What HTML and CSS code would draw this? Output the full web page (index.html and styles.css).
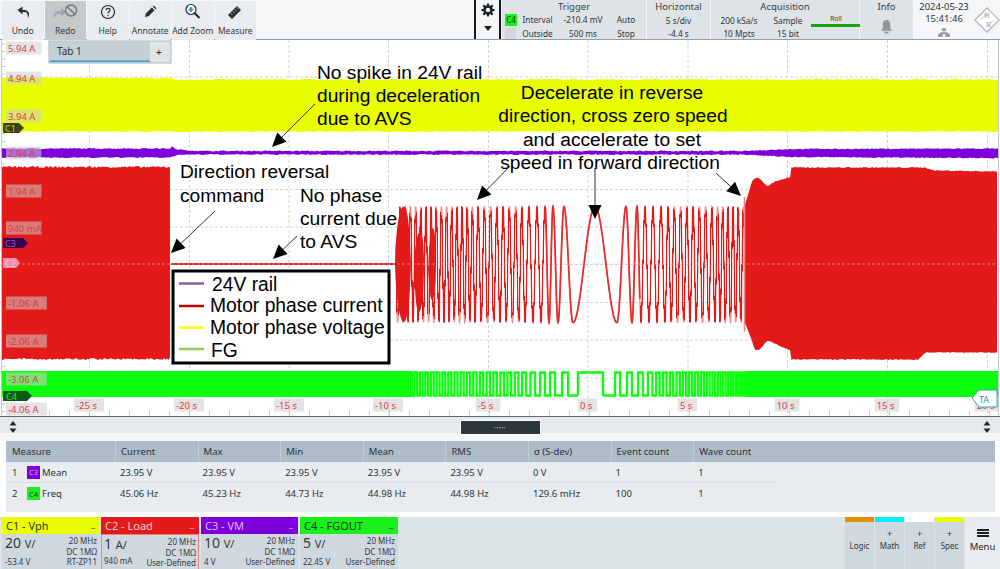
FILE: index.html
```html
<!DOCTYPE html>
<html lang="en">
<head>
<meta charset="utf-8">
<title>Oscilloscope</title>
<link rel="stylesheet" href="styles.css">
</head>
<body>
<div class="app">
  <header class="topbar">
    <nav class="tools">
      <div class="tool"><svg class="ico" viewBox="0 0 20 20"><path d="M12 17c2-3 1.500-7-3-8H6.500V5.500L1.500 9l5 4.500V11H9c2 .2 3 2.500 3 6z" fill="#2b2f33" transform="translate(3 -2)"/></svg><span>Undo</span></div>
      <div class="tool tool-off"><svg class="ico ico-wide" viewBox="0 0 28 20"><path d="M3 16c-1-4 .5-8 5-8h2V4.500L15 9l-5 4.500V11H8c-2.500 0-4 2-5 5z" fill="#a3a9ad"/><circle cx="20" cy="7.500" r="5.500" fill="none" stroke="#70767b" stroke-width="1.400"/><path d="M16 3.500l8 8" stroke="#70767b" stroke-width="1.400"/></svg><span>Redo</span></div>
      <div class="tool"><svg class="ico" viewBox="0 0 20 20"><circle cx="10" cy="9" r="6.500" fill="none" stroke="#2b2f33" stroke-width="1.200"/><path d="M8 7.200c.2-1.300 1-1.900 2-1.900 1.200 0 2.100.8 2.100 1.800 0 1.700-2.100 1.600-2.100 3.400M10 12v1.200" fill="none" stroke="#2b2f33" stroke-width="1.200"/></svg><span>Help</span></div>
      <div class="tool"><svg class="ico" viewBox="0 0 20 20"><path d="M5 14l.8-3.500 6-6 2.700 2.700-6 6z" fill="#2b2f33"/><path d="M12.800 3.500l1-1 2.700 2.700-1 1z" fill="#2b2f33"/></svg><span>Annotate</span></div>
      <div class="tool"><svg class="ico" viewBox="0 0 20 20"><circle cx="8" cy="6.500" r="5" fill="#fff" stroke="#2b2f33" stroke-width="1.200"/><path d="M5.500 6.500h5M8 4v5" stroke="#1f88d0" stroke-width="1.600"/><path d="M11.500 10l5 5" stroke="#2b2f33" stroke-width="2.200"/></svg><span>Add Zoom</span></div>
      <div class="tool"><svg class="ico" viewBox="0 0 20 20"><path d="M3 12l9-9 4 4-9 9z" fill="#2b2f33"/><path d="M6 10.500l1.200 1.200M8 8.500l1.200 1.200M10 6.500l1.200 1.200M12 4.500l1.200 1.200" stroke="#eef1f3" stroke-width=".9"/></svg><span>Measure</span></div>
    </nav>
    <div class="spacer"></div>
    <div class="gearbox">
      <svg class="gear" viewBox="0 0 16 16"><circle cx="8" cy="8" r="4" fill="none" stroke="#1c2024" stroke-width="3"/><path d="M8 .5v3M8 12.500v3M.5 8h3M12.500 8h3M2.700 2.700l2.100 2.100M11.200 11.200l2.100 2.100M13.300 2.700l-2.100 2.100M4.800 11.200l-2.100 2.100" stroke="#1c2024" stroke-width="2.400"/></svg>
      <svg class="caret" viewBox="0 0 8 5"><path d="M0 0h8L4 5z" fill="#1c2024"/></svg>
    </div>
    <section class="status st-trigger">
      <h3>Trigger</h3>
      <div class="trig-grid">
        <b class="c4tag">C4</b><span>Interval</span><span>-210.4 mV</span><span>Auto</span>
        <i class="c4ghost"></i><span>Outside</span><span>500 ms</span><span>Stop</span>
      </div>
    </section>
    <section class="status st-horiz">
      <h3>Horizontal</h3>
      <p>5 s/div</p>
      <p>-4.4 s</p>
    </section>
    <section class="status st-acq">
      <h3>Acquisition</h3>
      <div class="acq-grid">
        <span>200 kSa/s</span><span>Sample</span><span class="roll">Roll</span>
        <span>10 Mpts</span><span>15 bit</span><span></span>
      </div>
    </section>
    <section class="status st-info">
      <h3>Info</h3>
      <svg class="bell" viewBox="0 0 14 16"><path d="M7 1c-3 0-4 2.500-4 5v4l-2 2.500h12L11 10V6c0-2.500-1-5-4-5z" fill="#8f979c"/><rect x="5" y="13.500" width="4" height="2" fill="#8f979c"/></svg>
    </section>
    <div class="clock">
      <div class="clock-text">
        <p>2024-05-23</p>
        <p>15:41:46</p>
        <svg class="net" viewBox="0 0 14 10"><path d="M5 0h4v3H5zM0 7h5v3H0zM9 7h5v3H9zM6.500 3v2M2.500 7V5h9v2" fill="#8f979c" stroke="#8f979c" stroke-width=".5"/></svg>
      </div>
      <svg class="logo" viewBox="0 0 28 28"><path d="M14 1l13 13-13 13L1 14z" fill="#fff" stroke="#b4babe" stroke-width="1.500"/><path d="M7 14L14 7M14 21l7-7" stroke="#b4babe" stroke-width="1"/><text x="11" y="12" class="logo-t">R</text><text x="13" y="21" class="logo-t">S</text></svg>
    </div>
  </header>

  <main class="scope">
    <svg id="plot" class="plot" viewBox="0 0 1000 376" width="1000" height="376">
      <g id="grid"></g>
      <g id="traces" transform="translate(0 -40)"></g>
      <g id="labels" transform="translate(0 -40)"></g>
      <g transform="translate(0 -40)">
        <g class="marker">
          <path d="M3 123h16l5 5-5 5H3z" fill="#3f4306"/><text x="5" y="132" class="mk mk-y">C1</text>
          <path d="M3 238h20l5 5-5 5H3z" fill="#37054f"/><text x="5" y="247" class="mk mk-p">C3</text>
          <path d="M3 258h13l4 5-4 5H3z" fill="#ee8fb0"/><text x="5" y="267" class="mk mk-r">C2</text>
          <path d="M3 391h24l5 5-5 5H3z" fill="#0a5a12"/><text x="6" y="400" class="mk mk-g">C4</text>
          <path d="M972 398l7-8h18v17h-18z" fill="#fff" stroke="#2aa9b4"/><text x="979" y="403" class="mk mk-t">TA</text>
        </g>
        <g class="arrows">
          <g id="arrowset"></g>
        </g>
        <text class="note" x="317" y="79">No spike in 24V rail</text>
        <text class="note" x="317" y="102">during deceleration</text>
        <text class="note" x="317" y="125">due to AVS</text>
        <text class="note mid" x="612" y="99">Decelerate in reverse</text>
        <text class="note mid" x="613" y="122">direction, cross zero speed</text>
        <text class="note mid" x="612" y="146">and accelerate to set</text>
        <text class="note mid" x="610" y="169">speed in forward direction</text>
        <text class="note" x="180" y="178">Direction reversal</text>
        <text class="note" x="180" y="202">command</text>
        <text class="note" x="300" y="202">No phase</text>
        <text class="note" x="300" y="225">current due</text>
        <text class="note" x="300" y="248">to AVS</text>
        <rect class="legend" x="173" y="271" width="216" height="92"/>
        <path class="leg-line" d="M179 283.500h25" stroke="#8064a2"/>
        <path class="leg-line" d="M179 306h25" stroke="#c00000"/>
        <path class="leg-line" d="M179 327.500h25" stroke="#ffff00"/>
        <path class="leg-line" d="M179 349h25" stroke="#92d050"/>
        <text class="note leg-t" x="212" y="291">24V rail</text>
        <text class="note leg-t" x="210" y="312">Motor phase current</text>
        <text class="note leg-t" x="210" y="334">Motor phase voltage</text>
        <text class="note leg-t" x="211" y="357">FG</text>
      </g>
    </svg>
  </main>

  <div class="splitter">
    <svg class="updown" viewBox="0 0 8 14"><path d="M4 1l3.500 4.500h-7zM4 13L.5 8.500h7z" fill="#22282c"/></svg>
    <div class="handle"><span>•••••</span></div>
    <svg class="updown" viewBox="0 0 8 14"><path d="M4 1l3.500 4.500h-7zM4 13L.5 8.500h7z" fill="#22282c"/></svg>
  </div>

  <section class="measure">
    <div class="m-row m-head">
      <div class="cell first">Measure</div><div class="cell">Current</div><div class="cell">Max</div><div class="cell">Min</div><div class="cell">Mean</div><div class="cell">RMS</div><div class="cell">σ (S-dev)</div><div class="cell">Event count</div><div class="cell">Wave count</div>
    </div>
    <div class="m-row m-line">
      <div class="cell first"><span class="idx">1</span><b class="tag tag-p">C3</b>Mean</div><div class="cell">23.95 V</div><div class="cell">23.95 V</div><div class="cell">23.95 V</div><div class="cell">23.95 V</div><div class="cell">23.95 V</div><div class="cell">0 V</div><div class="cell">1</div><div class="cell">1</div>
    </div>
    <div class="m-row">
      <div class="cell first"><span class="idx">2</span><b class="tag tag-g">C4</b>Freq</div><div class="cell">45.06 Hz</div><div class="cell">45.23 Hz</div><div class="cell">44.73 Hz</div><div class="cell">44.98 Hz</div><div class="cell">44.98 Hz</div><div class="cell">129.6 mHz</div><div class="cell">100</div><div class="cell">1</div>
    </div>
  </section>

  <footer class="channels">
    <article class="ch ch1">
      <div class="ch-head"><span>C1 - Vph</span><span class="dash">_</span></div>
      <div class="ch-body"><div class="ch-l"><p class="big">20 <small>V/</small></p><p>-53.4 V</p></div><div class="ch-r"><p>20 MHz</p><p>DC 1MΩ</p><p>RT-ZP11</p></div></div>
    </article>
    <article class="ch ch2">
      <div class="ch-head"><span>C2 - Load</span><span class="dash">_</span></div>
      <div class="ch-body"><div class="ch-l"><p class="big">1 <small>A/</small></p><p>940 mA</p></div><div class="ch-r"><p>20 MHz</p><p>DC 1MΩ</p><p>User-Defined</p></div></div>
    </article>
    <article class="ch ch3">
      <div class="ch-head"><span>C3 - VM</span><span class="dash">_</span></div>
      <div class="ch-body"><div class="ch-l"><p class="big">10 <small>V/</small></p><p>4 V</p></div><div class="ch-r"><p>20 MHz</p><p>DC 1MΩ</p><p>User-Defined</p></div></div>
    </article>
    <article class="ch ch4">
      <div class="ch-head"><span>C4 - FGOUT</span><span class="dash">_</span></div>
      <div class="ch-body"><div class="ch-l"><p class="big">5 <small>V/</small></p><p>22.45 V</p></div><div class="ch-r"><p>20 MHz</p><p>DC 1MΩ</p><p>User-Defined</p></div></div>
    </article>
    <div class="spacer"></div>
    <div class="fn fn-logic"><span>Logic</span></div>
    <div class="fn fn-math"><i>+</i><span>Math</span></div>
    <div class="fn fn-ref"><i>+</i><span>Ref</span></div>
    <div class="fn fn-spec"><i>+</i><span>Spec</span></div>
    <div class="menu"><div class="burger"></div><span>Menu</span></div>
  </footer>
</div>
<script src="script.js"></script>
</body>
</html>
```
FILE: styles.css
```css
* { box-sizing: border-box; }
html, body { margin: 0; padding: 0; }
body { background: #fff; font-family: "Noto Sans", "Open Sans", sans-serif; color: #2b2f33; }
p, h3 { margin: 0; font-weight: 400; }
.app { width: 1000px; height: 569px; overflow: hidden; display: flex; flex-direction: column; }

.topbar { height: 40px; display: flex; background: #f4f6f7; border-bottom: 1px solid #8fa0ab; flex: none; }
.tools { display: flex; gap: 1px; padding: 1px 0 0 2px; }
.tool { width: 41.500px; height: 39px; background: #e8ecef; display: flex; flex-direction: column; align-items: center; font-size: 8.500px; color: #33383c; padding-top: 2px; }
.tool span { margin-top: 2px; white-space: nowrap; }
.tool-off { background: #c6c9ca; }
.ico { width: 20px; height: 20px; display: block; }
.ico-wide { width: 28px; }
.spacer { flex: 1; }
.gearbox { width: 27px; border-left: 2px solid #16191c; border-right: 2px solid #16191c; display: flex; flex-direction: column; align-items: center; padding-top: 3px; }
.gear { width: 14px; height: 14px; }
.caret { width: 8px; height: 5px; margin-top: 9px; }
.status { background: #dde3e7; margin-left: 1px; font-size: 8.300px; color: #32373b; text-align: center; height: 39px; }
.status h3 { font-size: 9.500px; line-height: 12px; padding-top: 1px; color: #3a4045; }
.st-trigger { width: 144px; }
.st-horiz { width: 63px; }
.st-horiz p { line-height: 13px; padding-top: 0; }
.st-horiz h3 { margin-bottom: 1px; }
.st-acq { width: 148px; }
.st-info { width: 53px; }
.trig-grid { display: grid; grid-template-columns: 14px 37px 54px 32px; align-items: center; grid-auto-rows: 13.500px; padding-left: 3px; margin-top: 0; }
.c4tag { background: #19f01c; color: #0d3f10; font-size: 8px; font-weight: 400; line-height: 12px; width: 12px; }
.c4ghost { background: #d2d9dd; width: 11px; height: 11px; display: block; }
.acq-grid { display: grid; grid-template-columns: 52px 46px 50px; grid-auto-rows: 13px; align-items: center; padding-left: 2px; margin-top: 1px; }
.roll { font-size: 6.500px; border-bottom: 3px solid #19a50f; line-height: 8px; height: 12px; margin-top: 1px; }
.bell { width: 13px; height: 15px; margin-top: 6px; }
.clock { width: 87px; display: flex; padding-left: 4px; }
.clock-text { width: 54px; text-align: center; font-size: 9.500px; line-height: 12px; color: #2e3337; padding-top: 1px; }
.net { width: 12px; height: 9px; display: block; margin: 3px auto 0; }
.logo { width: 26px; height: 26px; margin: 7px 0 0 3px; }
.logo-t { font-size: 8px; fill: #b4babe; font-family: "Liberation Sans", sans-serif; font-weight: 700; }

.scope { height: 376px; flex: none; position: relative; background: #fff; }
.plot { display: block; }
.mk { font-size: 9px; font-family: "Noto Sans", sans-serif; }
.mk-y { fill: #c9cf38; }
.mk-p { fill: #9a55c8; }
.mk-r { fill: #f8c4d6; }
.mk-g { fill: #33e33b; }
.mk-t { fill: #1c97a2; }
.note { font-family: "Liberation Sans", Arial, sans-serif; font-size: 19.200px; fill: #000; }
.leg-t { font-size: 19.300px; }
.mid { text-anchor: middle; }
.legend { fill: #fff; stroke: #000; stroke-width: 3; }
.leg-line { stroke-width: 2.500; fill: none; }
.gl { stroke: #d4d4d4; stroke-width: 1; stroke-dasharray: 3 2; fill: none; }
.tick { stroke: #c2c8cc; stroke-width: 1; fill: none; }
.axl { font-size: 9.500px; fill: #e03c3c; font-family: "Noto Sans", sans-serif; }
.axb { fill: rgba(205, 205, 205, .55); }
.tab-label { font-size: 10px; font-family: "Noto Sans", sans-serif; }

.splitter { height: 25px; flex: none; background: linear-gradient(#e6eaed 0 16px, #f4f6f7 16px); border-top: 1px solid #5c6a73; display: flex; justify-content: space-between; padding: 0 9px 0 9px; }
.updown { width: 8px; height: 14px; margin-top: 3px; }
.handle { width: 81px; height: 15px; margin-top: 3px; margin-right: 0; background: #2c373e; border: 1px solid #fff; display: flex; align-items: center; justify-content: center; color: #aab4ba; font-size: 5px; letter-spacing: .5px; }

.measure { margin: 0 5px 0 6px; height: 71px; flex: none; background: #e8ecef; font-size: 9.500px; color: #2e3337; }
.m-row { display: grid; grid-template-columns: 109px repeat(8, 82.600px); height: 21px; align-items: center; width: 772px; }
.m-line { border-bottom: 1px solid #d9dfe3; height: 21px; }
.m-head { background: #adbcc7; width: 989px; height: 21px; }
.cell { padding-left: 5px; height: 100%; display: flex; align-items: center; white-space: nowrap; }
.m-head .cell + .cell { border-left: 1px solid #c2ced6; }
.first { padding-left: 6px; }
.idx { width: 15px; }
.tag { width: 13px; height: 13px; font-size: 7.500px; font-weight: 400; display: flex; align-items: center; justify-content: center; margin-right: 2px; }
.tag-p { background: #7d00dc; color: #d9b2f5; }
.tag-g { background: #19f01c; color: #0d4310; }

.channels { margin-top: 5px; flex: 1; display: flex; gap: 1px; background: #dce3e6; padding-left: 2px; }
.ch { width: 98px; display: flex; flex-direction: column; }
.ch3 { width: 97px; margin-left: 1px; }
.ch4 { margin-left: 1px; }
.ch-head { height: 17px; display: flex; justify-content: space-between; padding: 0 5px 0 4px; font-size: 11px; line-height: 17px; white-space: nowrap; }
.dash { font-size: 9px; line-height: 14px; }
.ch1 .ch-head { background: #e9ff00; color: #33370a; }
.ch2 .ch-head { background: #e41a1a; color: #f8d2d2; }
.ch3 .ch-head { background: #7d00dc; color: #dcbcf5; }
.ch4 .ch-head { background: #19f01c; color: #0d4310; }
.ch-body { flex: 1; background: #cfd8df; display: flex; justify-content: space-between; padding: 0 3px 0 3px; font-size: 8px; color: #33383c; }
.ch2 .ch-body { border: 1px solid #ec7f7f; padding: 0 2px 0 2px; }
.ch-l { display: flex; flex-direction: column; justify-content: space-between; padding-bottom: 3px; }
.ch-r { text-align: right; line-height: 10.500px; padding-top: 2px; }
.ch-r p { height: 10.500px; white-space: nowrap; }
.big { font-size: 14px; line-height: 17px; }
.big small { font-size: 11px; }
.fn { width: 29px; margin-left: 0; background: #cfd8df; border-top: 5px solid; display: flex; flex-direction: column; align-items: center; justify-content: flex-end; font-size: 8px; color: #33383c; padding-bottom: 19px; }
.fn i { font-style: normal; font-size: 9px; line-height: 9px; margin-bottom: 2px; }
.fn-logic { border-top-color: #e09000; }
.fn-math { border-top-color: #00f0f5; }
.fn-ref { border-top-color: #fff; }
.fn-spec { border-top-color: #e9ff00; }
.menu { width: 35px; background: #e8ecef; display: flex; flex-direction: column; align-items: center; font-size: 9.500px; color: #22272b; padding-top: 12px; }
.burger { width: 12px; height: 8px; border-top: 2px solid #1c2024; border-bottom: 2px solid #1c2024; margin-bottom: 3px; }
.burger::after { content: ""; display: block; height: 1.500px; background: #1c2024; margin-top: 1.200px; }
```
FILE: script.js
```js
(function () {
  var NS = 'http://www.w3.org/2000/svg';
  function el(parent, name, attrs, text) {
    var e = document.createElementNS(NS, name);
    for (var k in attrs) e.setAttribute(k, attrs[k]);
    if (text) e.textContent = text;
    parent.appendChild(e);
    return e;
  }
  var seed = 7;
  function rnd() { seed = (seed * 16807) % 2147483647; return seed / 2147483647; }

  var RED = '#e41a1a', GREEN = '#0cff0c';
  var grid = document.getElementById('grid');
  var traces = document.getElementById('traces');
  var labels = document.getElementById('labels');

  // graticule
  var xs = [-12, 89, 189, 288.500, 388, 488, 587.500, 687.500, 787, 887, 987];
  var ys = [77, 114.500, 152, 189.500, 227, 264.500, 302.500, 340, 378];
  xs.forEach(function (x) { el(grid, 'path', { 'class': 'gl', d: 'M' + (x + .5) + ' 0V376' }); });
  ys.forEach(function (y) { el(grid, 'path', { 'class': 'gl', d: 'M0 ' + (y - 40) + 'H1000' }); });
  var ticks = '';
  for (var tx = 9; tx < 1000; tx += 20) ticks += 'M' + (tx + .5) + ' 371V375.500';
  for (var ty = 44; ty < 414; ty += 7.500) ticks += 'M2 ' + (ty - 40) + 'H5';
  ticks += 'M1.500 0V376M998.500 0V376';
  el(grid, 'path', { 'class': 'tick', d: ticks });

  function band(top, bottom, x0, x1, fill, jit, step) {
    var up = [], dn = [];
    for (var x = x0; x <= x1; x += step) {
      up.push(x + ' ' + (top(x) - rnd() * jit).toFixed(1));
      dn.unshift(x + ' ' + (bottom(x) + rnd() * jit).toFixed(1));
    }
    el(traces, 'path', { d: 'M' + up.concat(dn).join('L') + 'Z', fill: fill });
  }
  function pw(pts) {
    return function (x) {
      for (var i = 1; i < pts.length; i++) {
        if (x <= pts[i][0]) {
          var a = pts[i - 1], b = pts[i];
          return a[1] + (b[1] - a[1]) * (x - a[0]) / (b[0] - a[0] || 1);
        }
      }
      return pts[pts.length - 1][1];
    };
  }

  // C1 yellow
  band(pw([[2, 78], [170, 78.500], [175, 80], [1000, 80]]), pw([[2, 131], [1000, 131]]), 2, 998, '#e9ff00', 1, 3);
  // C3 purple
  band(pw([[2, 149], [170, 149], [172, 147], [176, 150], [200, 151.500], [740, 151.500], [790, 149.500], [1000, 149]]),
    pw([[2, 157], [170, 157], [172, 156], [180, 154], [740, 154], [790, 156.500], [1000, 157.500]]), 2, 998, '#7d00dc', 1, 2);
  // C2 left block
  band(pw([[2, 168], [171, 168]]), pw([[2, 358], [171, 358]]), 2, 171, RED, 2, 1.500);
  // flat phase current
  el(traces, 'path', { d: 'M171 264H396', stroke: RED, 'stroke-width': 2, fill: 'none' });

  // chirp: half periods as a function of distance from the zero crossing
  var table = [[0, 0], [22, 1], [31, 2], [37, 3], [42, 4], [70, 11], [120, 27], [200, 58]];
  var nOf = pw(table);
  function sig(x) {
    var d = Math.abs(x - 595);
    return 264.5 - 58 * Math.cos(Math.PI * nOf(d));
  }
  function poly(x0, x1, step) {
    var p = [];
    for (var x = x0; x <= x1; x += step) p.push(x + ' ' + sig(x).toFixed(1));
    return 'M' + p.join('L');
  }
  el(traces, 'path', { d: poly(396, 745, .2), stroke: '#f08a8a', 'stroke-width': 1.400, fill: 'none' });
  // darker aliased strokes where the record decimates the fast carrier
  var dark = '';
  for (var ax = 396; ax < 745; ax += 1) {
    if (ax > 545 && ax < 640) continue;
    var a = sig(ax), b = sig(ax + 1.100);
    dark += 'M' + (ax + .5) + ' ' + a.toFixed(1) + 'V' + b.toFixed(1);
  }
  el(traces, 'path', { d: dark, stroke: RED, 'stroke-width': 1, fill: 'none' });
  el(traces, 'path', { d: poly(545, 640, .2), stroke: '#ea2a2a', 'stroke-width': 1.700, fill: 'none' });
  // beat blobs at the start of the burst
  el(traces, 'path', { d: 'M395 264C396 225 400 205 404 207C408 205 410 235 411 264C410 295 408 322 404 322C400 322 396 300 395 264Z', fill: RED });
  el(traces, 'path', { d: 'M414 270C415 240 418 232 420 232C423 232 424 250 424 265C424 290 422 312 419 312C416 312 415 290 414 270Z', fill: RED });
  el(traces, 'path', { d: 'M428 270C429 245 431 228 433 228C435 228 436 250 436 262C436 285 434 300 432 300C430 300 429 285 428 270Z', fill: RED });

  // C2 right block
  var top = pw([[745, 205], [748, 195], [752, 182], [756, 178], [760, 179], [767, 187], [775, 182], [785, 179], [790, 178], [791.500, 168], [925, 168], [935, 171], [1000, 172]]);
  var bot = pw([[745, 322], [750, 335], [755, 350], [760, 349], [767, 340], [775, 343], [785, 348], [790, 349], [791.500, 359], [918, 359], [926, 352], [1000, 352]]);
  band(top, bot, 745, 998, RED, 1, 1.500);
  el(traces, 'path', { d: 'M744.500 197V332', stroke: '#f08a8a', 'stroke-width': 1.500 });
  el(traces, 'path', { d: 'M2 264H1000', stroke: 'rgba(255,200,200,.55)', 'stroke-width': 1, 'stroke-dasharray': '3 2' });

  // C4 FG
  el(traces, 'rect', { x: 2, y: 371, width: 409, height: 26, fill: GREEN });
  el(traces, 'rect', { x: 748, y: 371, width: 250, height: 26, fill: GREEN });
  function edges(start, firsts, dir, end, h0, h1) {
    var out = [start], x = start, i = 0;
    while ((end - x) * dir > 0) {
      var frac = Math.abs(x - start) / Math.abs(end - start);
      var h = i < firsts.length ? firsts[i] : h0 + (h1 - h0) * frac;
      x += dir * h; out.push(x); i++;
    }
    return out;
  }
  function square(list, startHigh) {
    var hi = startHigh, y0 = 372.500, y1 = 395.500;
    var d = 'M' + list[0] + ' ' + (hi ? y0 : y1);
    for (var i = 1; i < list.length; i++) {
      d += 'H' + list[i].toFixed(1);
      hi = !hi;
      d += 'V' + (hi ? y0 : y1);
    }
    return d;
  }
  var gAttrs = { stroke: GREEN, 'stroke-width': 2.300, fill: 'none' };
  gAttrs.d = square(edges(578, [10, 6, 7, 5, 5, 5, 5, 4.500, 4.500], -1, 411, 4.300, 2.600), false);
  el(traces, 'path', gAttrs);
  gAttrs.d = square(edges(603, [12, 5, 7, 5, 6, 5, 5, 4.500], 1, 748, 4.300, 2.200), false);
  el(traces, 'path', gAttrs);
  el(traces, 'path', { d: 'M578 395.500V372.500H603V395.500', stroke: GREEN, 'stroke-width': 2.300, fill: 'none' });

  // axis labels
  function label(cx, cy, text, anchorLeft) {
    var w = text.length * 5.400 + 3;
    var x = anchorLeft ? 6 : cx - w / 2;
    el(labels, 'rect', { 'class': 'axb', x: x, y: cy - 6.500, width: w, height: 13 });
    el(labels, 'text', { 'class': 'axl', x: x + 2, y: cy + 3.500 }, text);
  }
  [['5.94 A', 48], ['4.94 A', 78], ['3.94 A', 116], ['2.94 A', 153], ['1.94 A', 191], ['940 mA', 228], ['-1.06 A', 303], ['-2.06 A', 341], ['-3.06 A', 379], ['-4.06 A', 409]]
    .forEach(function (l) { label(0, l[1], l[0], true); });
  [['-25 s', 89], ['-20 s', 189], ['-15 s', 289], ['-10 s', 388], ['-5 s', 488], ['0 s', 587.500], ['5 s', 687.500], ['10 s', 787], ['15 s', 887], ['20 s', 987]]
    .forEach(function (l) { label(l[1], 405, l[0], false); });

  // tab strip overlay
  var tab = el(labels, 'g', {});
  el(tab, 'rect', { x: 49, y: 41, width: 122, height: 22, fill: '#dfe4e7', stroke: '#aab4ba' });
  el(tab, 'rect', { x: 50, y: 42, width: 100, height: 19, fill: '#c5d0d6' });
  el(tab, 'rect', { x: 50, y: 60.500, width: 100, height: 1.500, fill: '#3a9ad9' });
  el(tab, 'text', { x: 57, y: 55, 'class': 'tab-label', fill: '#2e3337' }, 'Tab 1');
  el(tab, 'text', { x: 156, y: 56, 'class': 'tab-label', fill: '#22272b' }, '+');

  // callout arrows
  var set = document.getElementById('arrowset');
  function arrow(x0, y0, x1, y1) {
    var dx = x1 - x0, dy = y1 - y0, l = Math.sqrt(dx * dx + dy * dy);
    var ux = dx / l, uy = dy / l, s = 14, w = 6.500;
    var bx = x1 - ux * s, by = y1 - uy * s;
    el(set, 'path', { d: 'M' + x0 + ' ' + y0 + 'L' + bx.toFixed(1) + ' ' + by.toFixed(1), stroke: '#333', 'stroke-width': 1, fill: 'none' });
    el(set, 'path', { d: 'M' + x1 + ' ' + y1 + 'L' + (bx - uy * w).toFixed(1) + ' ' + (by + ux * w).toFixed(1) + 'L' + (bx + uy * w).toFixed(1) + ' ' + (by - ux * w).toFixed(1) + 'Z', fill: '#000' });
  }
  arrow(315, 104, 272, 147);
  arrow(215, 211, 171, 253);
  arrow(297, 236, 273, 259);
  arrow(510, 166, 477, 200);
  arrow(595, 168, 595, 219);
  arrow(716, 173, 741, 196);
})();
```
